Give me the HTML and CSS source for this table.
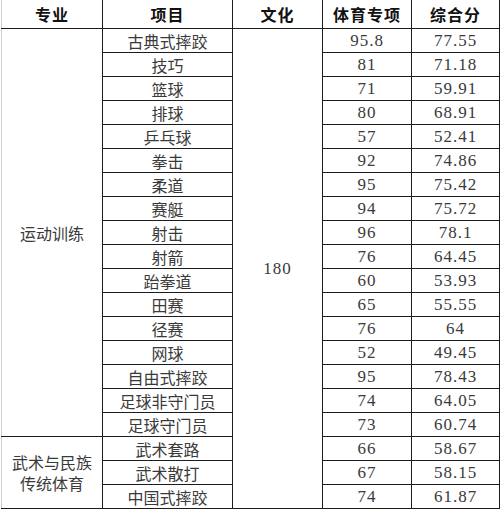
FILE: index.html
```html
<!DOCTYPE html>
<html lang="zh">
<head>
<meta charset="utf-8">
<link rel="stylesheet" href="styles.css">
</head>
<body>
<table class="score-table">
  <colgroup>
    <col class="c-major">
    <col class="c-item">
    <col class="c-culture">
    <col class="c-sport">
    <col class="c-total">
  </colgroup>
  <thead>
    <tr class="head-row">
      <th class="first">专业</th>
      <th>项目</th>
      <th>文化</th>
      <th>体育专项</th>
      <th>综合分</th>
    </tr>
  </thead>
  <tbody>
    <tr><td class="first major" rowspan="17">运动训练</td><td>古典式摔跤</td><td class="num culture" rowspan="20">180</td><td class="num">95.8</td><td class="num">77.55</td></tr>
    <tr><td>技巧</td><td class="num">81</td><td class="num">71.18</td></tr>
    <tr><td>篮球</td><td class="num">71</td><td class="num">59.91</td></tr>
    <tr><td>排球</td><td class="num">80</td><td class="num">68.91</td></tr>
    <tr><td>乒乓球</td><td class="num">57</td><td class="num">52.41</td></tr>
    <tr><td>拳击</td><td class="num">92</td><td class="num">74.86</td></tr>
    <tr><td>柔道</td><td class="num">95</td><td class="num">75.42</td></tr>
    <tr><td>赛艇</td><td class="num">94</td><td class="num">75.72</td></tr>
    <tr><td>射击</td><td class="num">96</td><td class="num">78.1</td></tr>
    <tr><td>射箭</td><td class="num">76</td><td class="num">64.45</td></tr>
    <tr><td>跆拳道</td><td class="num">60</td><td class="num">53.93</td></tr>
    <tr><td>田赛</td><td class="num">65</td><td class="num">55.55</td></tr>
    <tr><td>径赛</td><td class="num">76</td><td class="num">64</td></tr>
    <tr><td>网球</td><td class="num">52</td><td class="num">49.45</td></tr>
    <tr><td>自由式摔跤</td><td class="num">95</td><td class="num">78.43</td></tr>
    <tr><td>足球非守门员</td><td class="num">74</td><td class="num">64.05</td></tr>
    <tr><td>足球守门员</td><td class="num">73</td><td class="num">60.74</td></tr>
    <tr><td class="first major two-line" rowspan="3">武术与民族<br>传统体育</td><td>武术套路</td><td class="num">66</td><td class="num">58.67</td></tr>
    <tr><td>武术散打</td><td class="num">67</td><td class="num">58.15</td></tr>
    <tr><td>中国式摔跤</td><td class="num">74</td><td class="num">61.87</td></tr>
  </tbody>
</table>
</body>
</html>
```

FILE: styles.css
```css
html, body {
  margin: 0;
  padding: 0;
  background: #ffffff;
}

body {
  padding-left: 1px;
  font-family: "Liberation Serif", "Noto Sans CJK SC", serif;
}

.score-table {
  border-collapse: collapse;
  table-layout: fixed;
  width: 498px;
  border-top: none;
}

.c-major { width: 101px; }
.c-item { width: 130px; }
.c-culture { width: 90px; }
.c-sport { width: 89px; }
.c-total { width: 88px; }

.score-table th,
.score-table td {
  border: 1px solid #1c1c1c;
  padding: 0;
  text-align: center;
  vertical-align: middle;
  white-space: nowrap;
  overflow: hidden;
}

.score-table th {
  border-top: none;
  height: 28px;
  font-family: "Noto Sans CJK SC", sans-serif;
  font-weight: 700;
  font-size: 16px;
  color: #111;
  line-height: 20px;
  letter-spacing: 1px;
}

.score-table td {
  height: 23px;
  font-family: "Noto Sans CJK SC", sans-serif;
  font-weight: 400;
  font-size: 16px;
  line-height: 18px;
  color: #3a3a3a;
}

.score-table .first {
  border-left: 1px solid #cfcfcf;
}

.score-table td.num {
  font-family: "Liberation Serif", serif;
  font-size: 17px;
  letter-spacing: 1px;
  color: #3a3a3a;
}

.score-table td.two-line {
  line-height: 21px;
  white-space: normal;
}
```
